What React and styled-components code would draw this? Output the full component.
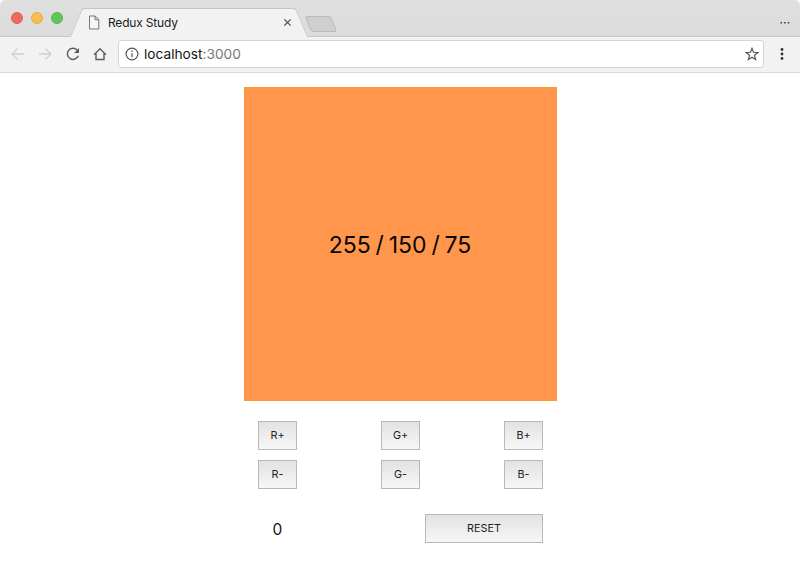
import React, { useState } from 'react';
import styled, { createGlobalStyle } from 'styled-components';

const GlobalStyle = createGlobalStyle`
  * { box-sizing: border-box; }
  body { margin: 0; background: #fff; font-family: Inter, "Liberation Sans", sans-serif; overflow: hidden; }
`;

const Window = styled.div`
  display: flex;
  flex-direction: column;
  width: 800px;
  height: 565px;
  background: #fff;
`;

const TabStrip = styled.header`
  display: flex;
  align-items: flex-end;
  height: 37px;
  background: linear-gradient(#dfdfdf, #dcdcdc);
  border-bottom: 1px solid #c8c8c8;
  border-radius: 5px 5px 0 0;
`;

const TrafficLights = styled.div`
  display: flex;
  align-self: flex-start;
  gap: 7.7px;
  width: 76px;
  padding: 12.4px 0 0 11.4px;
`;

const Light = styled.i`
  flex: none;
  width: 12px;
  height: 12px;
  border-radius: 50%;
  background: ${(p) => p.$fill};
  border: 1px solid ${(p) => p.$edge};
`;

const Tab = styled.div`
  position: relative;
  display: flex;
  align-items: center;
  width: 226px;
  height: 29px;
  margin-bottom: -1px;
  padding: 0 10px 0 12px;
  z-index: 0;

  &::before,
  &::after {
    content: '';
    position: absolute;
    z-index: -1;
    top: 0;
    bottom: 0;
    width: 60%;
    background: #f2f2f2;
    border-top: 1px solid #c4c4c4;
  }
  &::before {
    left: 0;
    border-left: 1px solid #c4c4c4;
    border-top-left-radius: 3px;
    transform: skewX(-23deg);
  }
  &::after {
    right: 0;
    border-right: 1px solid #c4c4c4;
    border-top-right-radius: 3px;
    transform: skewX(23deg);
  }
`;

const TabTitle = styled.span`
  flex: 1;
  margin-left: 8px;
  font-size: 12px;
  line-height: 16px;
  letter-spacing: -0.18px;
  color: #1c1c1c;
`;

const NewTab = styled.div`
  align-self: flex-start;
  width: 26px;
  height: 16px;
  margin: 16px 0 0 6px;
  background: #cfcfcf;
  border: 1px solid #bababa;
  border-radius: 3px;
  transform: skewX(22deg);
`;

const StripMenu = styled.div`
  display: flex;
  align-self: flex-start;
  margin: 22px 10px 0 auto;
`;

const Toolbar = styled.nav`
  display: flex;
  align-items: center;
  height: 36px;
  padding: 0 10px 1px 9px;
  background: #f2f2f2;
  border-bottom: 1px solid #d9d9d9;
`;

const ToolIcon = styled.span`
  display: flex;
  width: 16px;
  height: 16px;
  margin-right: ${(p) => p.$gap}px;
`;

const Address = styled.div`
  display: flex;
  align-items: center;
  width: 646px;
  height: 28px;
  padding: 0 4px 0 6px;
  background: #fff;
  border: 1px solid #d5d5d5;
  border-radius: 3px;
`;

const Url = styled.span`
  flex: 1;
  margin-left: 5px;
  font-size: 13.7px;
  line-height: 18px;
  color: #151515;
`;

const Port = styled.span`
  color: #777;
`;

const Main = styled.main`
  display: flex;
  flex-direction: column;
  align-items: center;
  padding: 14px 0 0 1px;
`;

const Swatch = styled.section`
  display: flex;
  align-items: center;
  justify-content: center;
  width: 313px;
  height: 314px;
  padding: 2px 1px 0 0;
  border: 1px solid #ff9933;
  font-size: 23px;
  line-height: 28px;
  word-spacing: -1.6px;
  color: #080503;
`;

const Controls = styled.div`
  display: flex;
  flex-direction: column;
  width: 285px;
  padding-top: 20px;
`;

const Row = styled.div`
  display: flex;
  justify-content: space-between;
  margin-bottom: ${(p) => p.$after}px;
`;

const Button = styled.button`
  width: ${(p) => (p.$wide ? 118 : 39)}px;
  height: 29px;
  padding: 0;
  border: 1px solid #b9b9b9;
  border-radius: 0;
  background: linear-gradient(#e2e2e2, #f7f7f7);
  font: 10.8px/14px Inter, "Liberation Sans", sans-serif;
  color: #222;
`;

const Count = styled.output`
  width: 39px;
  padding-top: 2px;
  font-size: 15.5px;
  line-height: 27px;
  text-align: center;
  color: #111;
`;

const Arrow = ({ flip }) => (
  <svg width="16" height="16" viewBox="0 0 16 16" fill="none" stroke="#d0d0d0" strokeWidth="1.3">
    <path d={flip ? 'M2 8H14M8.5 2.5L14 8L8.5 13.5' : 'M15 8H3M8.5 2.5L3 8L8.5 13.5'} />
  </svg>
);

const Reload = () => (
  <svg width="16" height="16" viewBox="0 0 16 16">
    <path d="M12 3.9A5.6 5.6 0 1 0 13.2 9.8" fill="none" stroke="#5c5c5c" strokeWidth="1.5" />
    <path d="M14 2V7H9Z" fill="#5c5c5c" />
  </svg>
);

const Home = () => (
  <svg width="16" height="16" viewBox="0 0 16 16" fill="none" stroke="#5c5c5c" strokeWidth="1.4">
    <path d="M2 8.7L8 2.7L14 8.7M4 7.6V13.5H12V7.6" />
  </svg>
);

const Page = () => (
  <svg width="12" height="15" viewBox="0 0 12 15" fill="#f7f7f7" stroke="#777">
    <path d="M1.5 1H7L10.8 4.7V14H1.5ZM7 1V4.7H10.8" />
  </svg>
);

const Close = () => (
  <svg width="9" height="9" viewBox="0 0 9 9" stroke="#4a4a4a" strokeWidth="1.2">
    <path d="M1.3 1.3L7.7 7.7M7.7 1.3L1.3 7.7" />
  </svg>
);

const Info = () => (
  <svg width="14" height="14" viewBox="0 0 14 14" fill="none" stroke="#555" strokeWidth="1.2">
    <circle cx="7" cy="7" r="5.9" />
    <path d="M7 6.2V10.3M7 3.6V5" />
  </svg>
);

const Star = () => (
  <svg width="14" height="14" viewBox="0 0 14 14" fill="none" stroke="#555" strokeWidth="1.2">
    <path d="M7 1.4L8.5 5.3L12.8 5.6L9.5 8.3L10.6 12.5L7 10.2L3.4 12.5L4.5 8.3L1.2 5.6L5.5 5.3Z" />
  </svg>
);

const Dots = ({ vertical }) =>
  vertical ? (
    <svg width="4" height="14" viewBox="0 0 4 14" fill="#333">
      <circle cx="2" cy="2.5" r="1.4" />
      <circle cx="2" cy="7" r="1.4" />
      <circle cx="2" cy="11.5" r="1.4" />
    </svg>
  ) : (
    <svg width="10" height="2" viewBox="0 0 10 2" fill="#444">
      <path d="M.5 0h1.6v1.5H.5zM4.1 0h1.6v1.5H4.1zM7.7 0h1.6v1.5H7.7z" />
    </svg>
  );

const MenuSlot = styled.span`
  display: flex;
  margin-left: 16px;
`;

const INITIAL = [255, 150, 75];
const CHANNELS = ['R', 'G', 'B'];

export default function App() {
  const [color, setColor] = useState(INITIAL);
  const [count, setCount] = useState(0);

  const step = (index, delta) => {
    setColor(color.map((v, i) => (i === index ? Math.max(0, Math.min(255, v + delta)) : v)));
    setCount(count + 1);
  };
  const reset = () => {
    setColor(INITIAL);
    setCount(0);
  };

  return (
    <Window>
      <GlobalStyle />
      <TabStrip>
        <TrafficLights>
          <Light $fill="#ee6a5f" $edge="#df6358" />
          <Light $fill="#f5be4f" $edge="#e3ad45" />
          <Light $fill="#62c655" $edge="#58b44c" />
        </TrafficLights>
        <Tab>
          <Page />
          <TabTitle>Redux Study</TabTitle>
          <Close />
        </Tab>
        <NewTab />
        <StripMenu>
          <Dots />
        </StripMenu>
      </TabStrip>
      <Toolbar>
        <ToolIcon $gap={12}><Arrow /></ToolIcon>
        <ToolIcon $gap={12}><Arrow flip /></ToolIcon>
        <ToolIcon $gap={11}><Reload /></ToolIcon>
        <ToolIcon $gap={10}><Home /></ToolIcon>
        <Address>
          <Info />
          <Url>localhost<Port>:3000</Port></Url>
          <Star />
        </Address>
        <MenuSlot><Dots vertical /></MenuSlot>
      </Toolbar>
      <Main>
        <Swatch style={{ backgroundColor: `rgb(${color.join(',')})` }}>{color.join(' / ')}</Swatch>
        <Controls>
          <Row $after={10}>
            {CHANNELS.map((c, i) => <Button key={c} onClick={() => step(i, 5)}>{c}+</Button>)}
          </Row>
          <Row $after={25}>
            {CHANNELS.map((c, i) => <Button key={c} onClick={() => step(i, -5)}>{c}-</Button>)}
          </Row>
          <Row $after={0}>
            <Count>{count}</Count>
            <Button $wide onClick={reset}>RESET</Button>
          </Row>
        </Controls>
      </Main>
    </Window>
  );
}
